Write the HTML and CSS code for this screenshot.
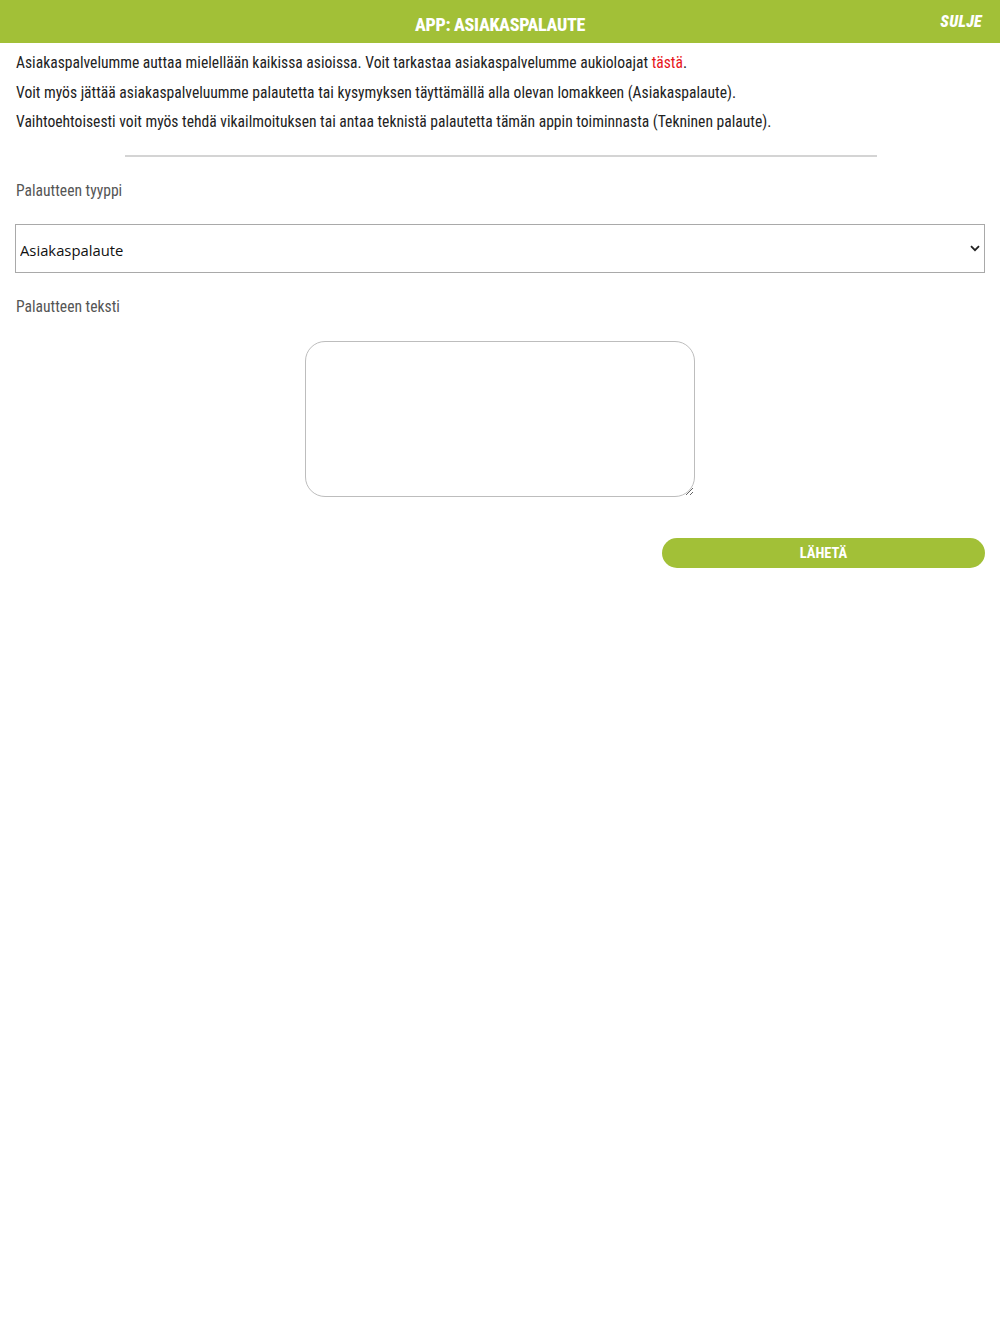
FILE: index.html
```html
<!DOCTYPE html>
<html lang="fi">
<head>
    <meta charset="UTF-8">
    <meta name="viewport" content="width=device-width, initial-scale=1.0">
    <title>App: Asiakaspalaute</title>
    <link rel="stylesheet" href="styles.css">
</head>
<body>

    <div class="header">
        <h1>APP: ASIAKASPALAUTE</h1>
        <a class="close" href="#">SULJE</a>
    </div>

    <div class="content">
        <p>Asiakaspalvelumme auttaa mielellään kaikissa asioissa. Voit tarkastaa asiakaspalvelumme aukioloajat <a class="link" href="#">tästä</a>.</p>
        <p>Voit myös jättää asiakaspalveluumme palautetta tai kysymyksen täyttämällä alla olevan lomakkeen (Asiakaspalaute).</p>
        <p>Vaihtoehtoisesti voit myös tehdä vikailmoituksen tai antaa teknistä palautetta tämän appin toiminnasta (Tekninen palaute).</p>

        <hr class="divider">

        <label class="field-label" for="type">Palautteen tyyppi</label>
        <div class="select-wrap">
            <select id="type">
                <option value="asiakas">Asiakaspalaute</option>
                <option value="tekninen">Tekninen palaute</option>
            </select>
            <svg class="chevron" width="10" height="7" viewBox="0 0 10 7"><path d="M1 1.2 L5 5.2 L9 1.2" fill="none" stroke="#222" stroke-width="1.8"/></svg>
        </div>

        <label class="field-label" for="text">Palautteen teksti</label>
        <div class="text-wrap">
            <textarea id="text"></textarea>
        </div>

        <div class="actions">
            <button>LÄHETÄ</button>
        </div>
    </div>

</body>
</html>
```

FILE: styles.css
```css
body {
    font-family: "Roboto Condensed", "Liberation Sans Narrow", Roboto, sans-serif;
    margin: 0;
    background-color: white;
    color: #222;
}
.header {
    height: 43px;
    background-color: #a2c037;
    display: flex;
    align-items: center;
    justify-content: center;
    position: relative;
}
.header h1 {
    margin: 6px 0 0 0;
    color: white;
    font-size: 18px;
    font-weight: 800;
    letter-spacing: -0.3px;
}
.close {
    position: absolute;
    right: 18px;
    top: 12px;
    color: white;
    font-size: 16px;
    font-weight: 900;
    font-style: italic;
    letter-spacing: 0.3px;
    text-decoration: none;
}
.content {
    padding: 0 15px 0 16px;
}
.content p {
    margin: 0;
    font-size: 15.6px;
    line-height: 29.5px;
}
.content p:first-child {
    margin-top: 6px;
}
.link {
    color: #e8141b;
    text-decoration: none;
}
.divider {
    width: 752px;
    margin: 17px auto 0 auto;
    border: none;
    border-top: 2px solid #d4d4d4;
}
.field-label {
    display: block;
    color: #555;
    font-size: 15.6px;
    line-height: 20px;
    margin-top: 24px;
}
.select-wrap {
    position: relative;
    margin: 23px 0 0 -1px;
}
.select-wrap select {
    width: 100%;
    height: 49px;
    appearance: none;
    -webkit-appearance: none;
    border: 1px solid #a9a9a9;
    border-radius: 0;
    background: white;
    font-family: "Open Sans", sans-serif;
    font-size: 14.8px;
    color: #111;
    padding: 3px 4px 0 4px;
}
.chevron {
    position: absolute;
    right: 5px;
    top: 21px;
}
.text-wrap {
    display: flex;
    justify-content: center;
    margin: 24px 0 0 -1px;
}
.text-wrap textarea {
    width: 390px;
    height: 156px;
    box-sizing: border-box;
    border: 1px solid #bdbdbd;
    border-radius: 20px;
    padding: 10px;
    font-family: "Open Sans", sans-serif;
    font-size: 16px;
    resize: both;
    outline: none;
}
.actions {
    display: flex;
    justify-content: flex-end;
    margin-top: 41px;
}
.actions button {
    width: 323px;
    height: 30px;
    background-color: #a2c037;
    color: white;
    border: none;
    border-radius: 15px;
    font-family: "Roboto Condensed", Roboto, sans-serif;
    font-size: 14.5px;
    font-weight: bold;
    padding-top: 2px;
    cursor: pointer;
}
```
